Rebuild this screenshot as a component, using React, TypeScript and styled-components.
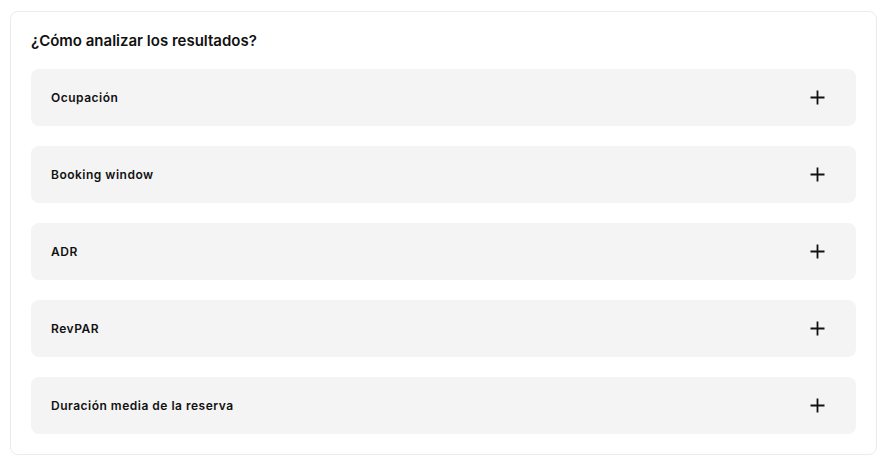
import styled, { createGlobalStyle } from "styled-components";

const GlobalStyle = createGlobalStyle`
  html, body {
    margin: 0;
    padding: 0;
    background: #ffffff;
  }
  * {
    box-sizing: border-box;
  }
`;

const Card = styled.section`
  margin: 11px 12px 0 10px;
  border: 1px solid #ebebeb;
  border-radius: 8px;
  background: #ffffff;
  padding: 20px;
  font-family: Inter, "Noto Sans", sans-serif;
  color: #111111;
`;

const Title = styled.h2`
  margin: 0 0 19px 0;
  font-size: 15px;
  font-weight: 600;
  line-height: 18px;
`;

const List = styled.div`
  display: flex;
  flex-direction: column;
  gap: 20px;
`;

const Item = styled.button`
  display: flex;
  align-items: center;
  justify-content: space-between;
  width: 100%;
  height: 57px;
  padding: 0 31px 0 20px;
  border: none;
  border-radius: 8px;
  background: #f4f4f4;
  cursor: pointer;
  font-family: inherit;
  color: inherit;
  text-align: left;
`;

const Label = styled.span`
  font-size: 12px;
  font-weight: 600;
  letter-spacing: 0.5px;
`;

const PlusIcon = () => (
  <svg width="15" height="15" viewBox="0 0 15 15" fill="none">
    <path d="M7.5 0.5V14.5M0.5 7.5H14.5" stroke="#111" strokeWidth="1.8" />
  </svg>
);

const items = [
  "Ocupación",
  "Booking window",
  "ADR",
  "RevPAR",
  "Duración media de la reserva",
];

export default function App() {
  return (
    <>
      <GlobalStyle />
      <Card>
        <Title>¿Cómo analizar los resultados?</Title>
        <List>
          {items.map((label) => (
            <Item key={label}>
              <Label>{label}</Label>
              <PlusIcon />
            </Item>
          ))}
        </List>
      </Card>
    </>
  );
}
